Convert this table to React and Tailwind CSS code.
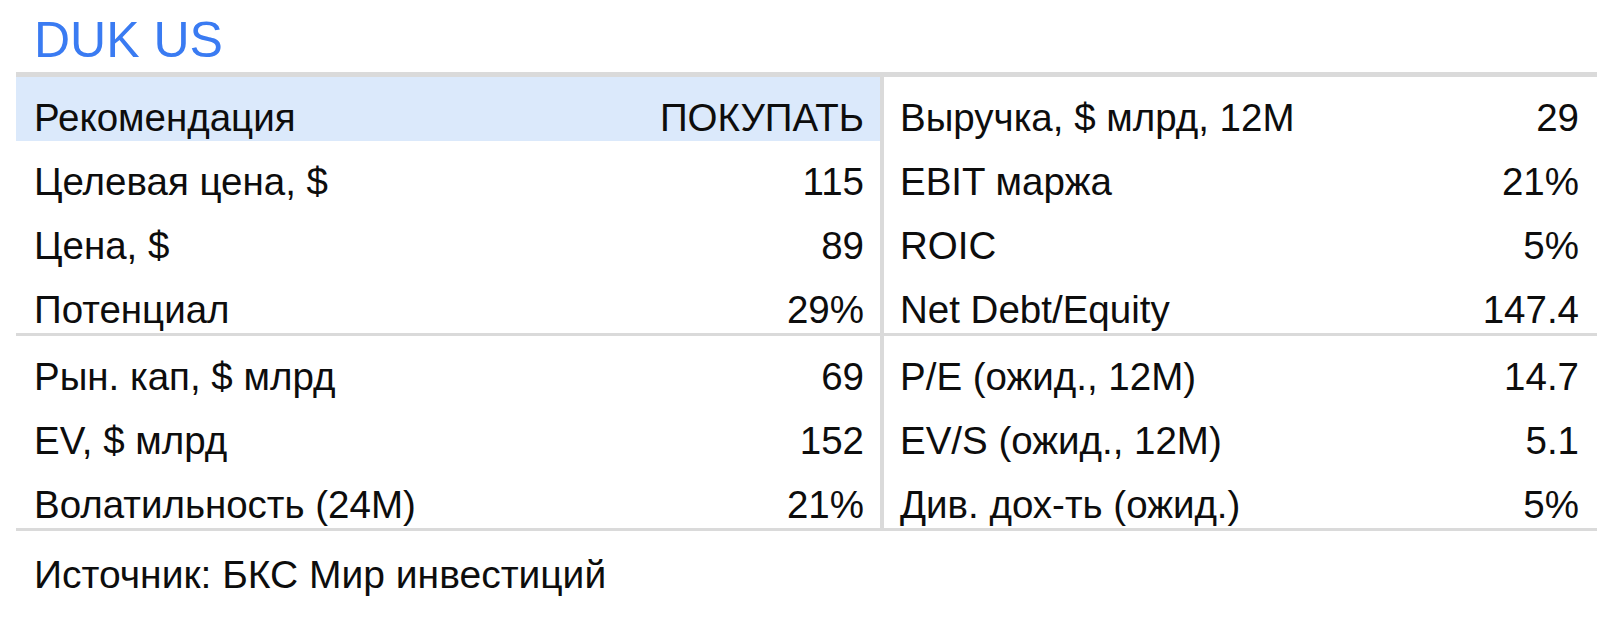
const upper = [
  ['Рекомендация', 'ПОКУПАТЬ', 'Выручка, $ млрд, 12М', '29'],
  ['Целевая цена, $', '115', 'EBIT маржа', '21%'],
  ['Цена, $', '89', 'ROIC', '5%'],
  ['Потенциал', '29%', 'Net Debt/Equity', '147.4'],
];

const lower = [
  ['Рын. кап, $ млрд', '69', 'P/E (ожид., 12М)', '14.7'],
  ['EV, $ млрд', '152', 'EV/S (ожид., 12М)', '5.1'],
  ['Волатильность (24М)', '21%', 'Див. дох-ть (ожид.)', '5%'],
];

function Section({ rows, highlightFirst }) {
  return (
    <div className="flex">
      <div className="w-[868px] border-r-4 border-[#dadada]">
        {rows.map((r, i) => (
          <div
            key={i}
            className={`h-16 flex items-end justify-between pl-[18px] pr-[16px] pb-[4px] ${
              highlightFirst && i === 0 ? 'bg-[#dbe9fb]' : ''
            }`}
          >
            <span>{r[0]}</span>
            <span>{r[1]}</span>
          </div>
        ))}
      </div>
      <div className="flex-1">
        {rows.map((r, i) => (
          <div key={i} className="h-16 flex items-end justify-between pl-[16px] pr-[18px] pb-[4px]">
            <span>{r[2]}</span>
            <span>{r[3]}</span>
          </div>
        ))}
      </div>
    </div>
  );
}

export default function App() {
  return (
    <div className="w-[1616px] h-[617px] bg-white text-[#0d0d0d] font-['Liberation_Sans',Arial,sans-serif]">
      <h1 className="pl-[34px] pt-[15px] h-[72px] text-[50px] leading-none text-[#3a7bf2]">DUK US</h1>
      <div className="ml-4 w-[1581px] border-t-[5px] border-b-[3px] border-[#dadada] text-[38.5px] leading-none">
        <Section rows={upper} highlightFirst />
        <div className="border-t-[3px] border-[#dadada]">
          <Section rows={lower} />
        </div>
      </div>
      <p className="pl-[34px] pt-[24px] text-[39px] leading-none">Источник: БКС Мир инвестиций</p>
    </div>
  );
}
